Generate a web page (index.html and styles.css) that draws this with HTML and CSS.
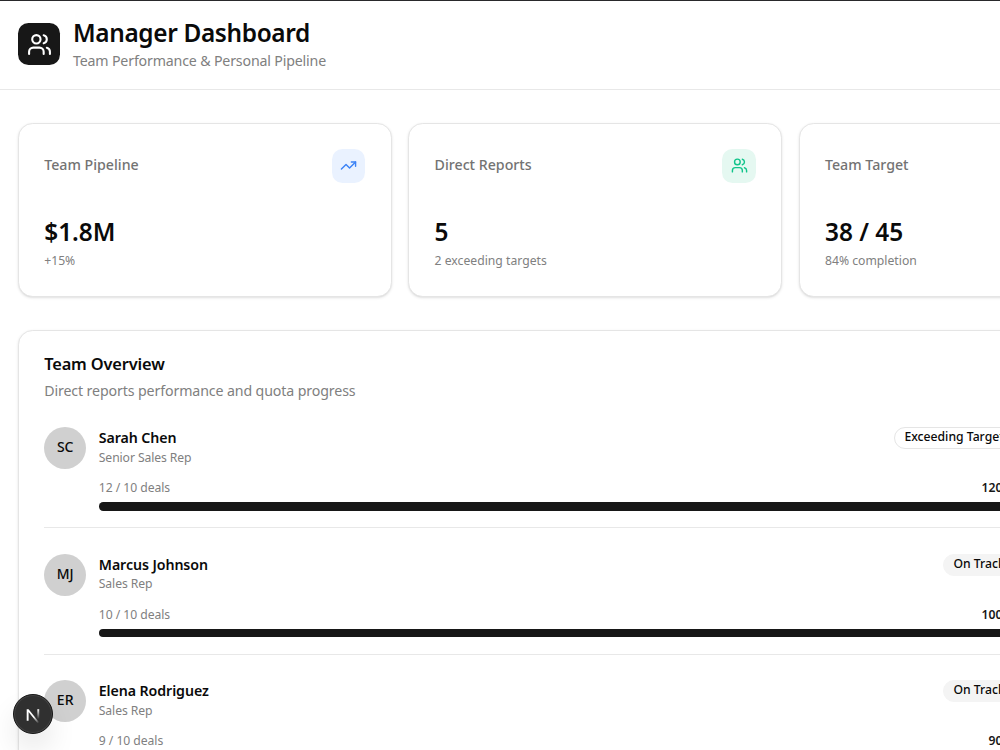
FILE: index.html
```html
<!DOCTYPE html>
<html lang="en">
<head>
  <meta charset="UTF-8">
  <meta name="viewport" content="width=device-width, initial-scale=1.0">
  <title>Manager Dashboard</title>
  <link rel="stylesheet" href="styles.css">
</head>
<body>
  <div class="page">
    <header class="header">
      <div class="header-icon">
        <svg class="icon" viewBox="0 0 24 24"><path d="M16 21v-2a4 4 0 0 0-4-4H6a4 4 0 0 0-4 4v2"/><circle cx="9" cy="7" r="4"/><path d="M22 21v-2a4 4 0 0 0-3-3.87"/><path d="M16 3.13a4 4 0 0 1 0 7.75"/></svg>
      </div>
      <div>
        <h1 class="title">Manager Dashboard</h1>
        <p class="subtitle">Team Performance &amp; Personal Pipeline</p>
      </div>
    </header>

    <main class="content">
      <section class="stats">
        <div class="card stat">
          <div class="stat-head">
            <span class="stat-label">Team Pipeline</span>
            <div class="stat-icon blue">
              <svg class="icon" viewBox="0 0 24 24"><path d="M22 7l-8.5 8.5-5-5L2 17"/><path d="M16 7h6v6"/></svg>
            </div>
          </div>
          <div class="stat-value">$1.8M</div>
          <div class="stat-note">+15%</div>
        </div>
        <div class="card stat">
          <div class="stat-head">
            <span class="stat-label">Direct Reports</span>
            <div class="stat-icon green">
              <svg class="icon" viewBox="0 0 24 24"><path d="M16 21v-2a4 4 0 0 0-4-4H6a4 4 0 0 0-4 4v2"/><circle cx="9" cy="7" r="4"/><path d="M22 21v-2a4 4 0 0 0-3-3.87"/><path d="M16 3.13a4 4 0 0 1 0 7.75"/></svg>
            </div>
          </div>
          <div class="stat-value">5</div>
          <div class="stat-note">2 exceeding targets</div>
        </div>
        <div class="card stat">
          <div class="stat-head">
            <span class="stat-label">Team Target</span>
          </div>
          <div class="stat-value">38 / 45</div>
          <div class="stat-note">84% completion</div>
        </div>
      </section>

      <section class="card overview">
        <h2 class="overview-title">Team Overview</h2>
        <p class="overview-text">Direct reports performance and quota progress</p>

        <div class="member">
          <div class="avatar">SC</div>
          <div class="member-body">
            <div class="member-top">
              <div>
                <div class="name">Sarah Chen</div>
                <div class="role">Senior Sales Rep</div>
              </div>
              <span class="badge outline">Exceeding Target</span>
            </div>
            <div class="quota"><span>12 / 10 deals</span><b>120%</b></div>
            <div class="bar"></div>
          </div>
        </div>

        <div class="member">
          <div class="avatar">MJ</div>
          <div class="member-body">
            <div class="member-top">
              <div>
                <div class="name">Marcus Johnson</div>
                <div class="role">Sales Rep</div>
              </div>
              <span class="badge">On Track</span>
            </div>
            <div class="quota"><span>10 / 10 deals</span><b>100%</b></div>
            <div class="bar"></div>
          </div>
        </div>

        <div class="member">
          <div class="avatar">ER</div>
          <div class="member-body">
            <div class="member-top">
              <div>
                <div class="name">Elena Rodriguez</div>
                <div class="role">Sales Rep</div>
              </div>
              <span class="badge">On Track</span>
            </div>
            <div class="quota"><span>9 / 10 deals</span><b>90%</b></div>
            <div class="bar"></div>
          </div>
        </div>
      </section>
    </main>
  </div>

  <div class="dev-button">
    <svg class="dev-logo" viewBox="0 0 40 40" fill="none">
      <defs>
        <linearGradient id="fade-a" x1="22" y1="22" x2="26" y2="28" gradientUnits="userSpaceOnUse"><stop stop-color="#fff"/><stop offset="1" stop-color="#fff" stop-opacity="0.1"/></linearGradient>
        <linearGradient id="fade-b" x1="0" y1="15" x2="0" y2="25" gradientUnits="userSpaceOnUse"><stop stop-color="#fff"/><stop offset="1" stop-color="#fff" stop-opacity="0"/></linearGradient>
      </defs>
      <path d="M13.700 26.800V15.200h1.900L26 28.200l-1.400 1.100-9-11.300v8.800z" fill="url(#fade-a)"/>
      <path d="M24.300 15.200h1.900v9.800h-1.900z" fill="url(#fade-b)"/>
    </svg>
  </div>
</body>
</html>
```
FILE: styles.css
```css
* {
  margin: 0;
  padding: 0;
  box-sizing: border-box;
}

body {
  height: 750px;
  overflow: hidden;
  background: #fff;
  color: #0a0a0a;
  font-family: "Noto Sans", sans-serif;
}

.page {
  width: 1100px;
  border-top: 1px solid #29292b;
}

.icon {
  fill: none;
  stroke: currentColor;
  stroke-width: 2;
  stroke-linecap: round;
  stroke-linejoin: round;
}

.header {
  display: flex;
  align-items: center;
  gap: 13px;
  height: 89px;
  padding: 0 18px 1.4px;
  border-bottom: 1px solid #e8e8e8;
}

.header-icon {
  display: flex;
  align-items: center;
  justify-content: center;
  width: 42px;
  height: 42px;
  border-radius: 10.5px;
  background: #171717;
  color: #fff;
}

.header-icon .icon {
  width: 25px;
  height: 25px;
}

.title {
  font-size: 24.4px;
  line-height: 32px;
  font-weight: 600;
  letter-spacing: -0.35px;
}

.subtitle {
  font-size: 14.2px;
  line-height: 23px;
  letter-spacing: -0.17px;
  color: #808080;
}

.content {
  padding: 33px 18px 0;
}

.stats {
  display: grid;
  grid-template-columns: repeat(3, 373.6px);
  gap: 16.8px;
  margin-bottom: 33px;
}

.card {
  border: 1px solid #e5e5e5;
  border-radius: 14.7px;
  background: #fff;
  box-shadow: 0 1px 3px rgba(0, 0, 0, 0.1), 0 1px 2px -1px rgba(0, 0, 0, 0.1);
}

.stat {
  height: 173.6px;
  padding: 25px 25.2px;
}

.stat-head {
  display: flex;
  justify-content: space-between;
  height: 33.6px;
  margin-bottom: 33px;
}

.stat-label {
  font-size: 14.2px;
  line-height: 32px;
  font-weight: 500;
  color: #737373;
}

.stat-icon {
  display: flex;
  align-items: center;
  justify-content: center;
  width: 33.6px;
  height: 33.6px;
  border-radius: 10.5px;
}

.stat-icon .icon {
  width: 17px;
  height: 17px;
}

.blue {
  background: #eaf2ff;
  color: #3b82f6;
}

.green {
  background: #e5f8f1;
  color: #10c48a;
}

.stat-value {
  font-size: 24.4px;
  line-height: 32px;
  font-weight: 600;
}

.stat-note {
  margin-top: 3.4px;
  font-size: 12.2px;
  line-height: 19px;
  color: #808080;
}

.overview {
  width: 1023.6px;
  padding: 20px 25.2px;
}

.overview-title {
  font-size: 16.4px;
  line-height: 26px;
  font-weight: 600;
  letter-spacing: -0.15px;
}

.overview-text {
  margin-top: 3px;
  margin-bottom: 25.7px;
  font-size: 14.2px;
  line-height: 22px;
  letter-spacing: -0.12px;
  color: #808080;
}

.member {
  display: flex;
  gap: 12.6px;
  margin-bottom: 25.2px;
  padding-bottom: 16.8px;
  border-bottom: 1px solid #e8e8e8;
}

.avatar {
  display: flex;
  justify-content: center;
  flex: none;
  width: 42px;
  height: 42px;
  border-radius: 50%;
  background: #d0d0d0;
  font-size: 14px;
  line-height: 40px;
  font-weight: 500;
}

.member-body {
  flex: 1;
}

.member-top {
  display: flex;
  justify-content: space-between;
  align-items: flex-start;
  height: 52px;
}

.name {
  font-size: 14.2px;
  line-height: 22.6px;
  font-weight: 600;
  letter-spacing: -0.08px;
}

.role {
  font-size: 12.2px;
  line-height: 15px;
  letter-spacing: -0.1px;
  color: #808080;
}

.badge {
  width: 72px;
  height: 22px;
  padding-left: 9px;
  border: 1px solid #f4f4f4;
  border-radius: 11px;
  background: #f4f4f4;
  font-size: 12.2px;
  line-height: 17px;
  font-weight: 500;
  white-space: nowrap;
}

.badge.outline {
  width: 121px;
  border-color: #e5e5e5;
  background: #fff;
}

.quota {
  display: flex;
  justify-content: space-between;
  height: 23px;
  font-size: 12.2px;
  line-height: 18.6px;
  letter-spacing: -0.06px;
  color: #808080;
}

.quota b {
  margin-right: 2.5px;
  color: #171717;
  font-weight: 600;
}

.bar {
  height: 8.4px;
  border-radius: 4.2px;
  background: #171717;
}

/* floating dev tools button */
.dev-button {
  position: fixed;
  left: 13px;
  top: 694px;
  width: 40px;
  height: 40px;
  border: 1px solid #171717;
  border-radius: 50%;
  background: #303030;
  box-shadow: inset 0 0 0 1px #444, 0 16px 32px -8px rgba(0, 0, 0, 0.24);
}

.dev-logo {
  display: block;
  width: 40px;
  height: 40px;
  margin: -1px;
}
```
